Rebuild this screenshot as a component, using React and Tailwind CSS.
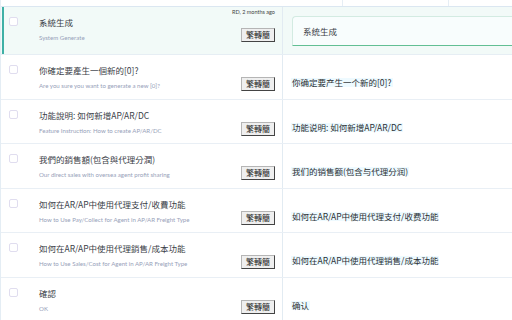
import React from 'react';

const rows = [
  { tw: '你確定要產生一個新的[0]?', en: 'Are you sure you want to generate a new [0]?', cn: '你确定要产生一个新的[0]?' },
  { tw: '功能說明: 如何新增AP/AR/DC', en: 'Feature Instruction: How to create AP/AR/DC', cn: '功能说明: 如何新增AP/AR/DC' },
  { tw: '我們的銷售額(包含與代理分潤)', en: 'Our direct sales with oversea agent profit sharing', cn: '我们的销售额(包含与代理分润)' },
  { tw: '如何在AR/AP中使用代理支付/收費功能', en: 'How to Use Pay/Collect for Agent in AP/AR Freight Type', cn: '如何在AR/AP中使用代理支付/收费功能' },
  { tw: '如何在AR/AP中使用代理銷售/成本功能', en: 'How to Use Sales/Cost for Agent in AP/AR Freight Type', cn: '如何在AR/AP中使用代理销售/成本功能' },
  { tw: '確認', en: 'OK', cn: '确认' },
];

const ConvertButton = () => (
  <button
    type="button"
    className="h-[14px] w-[34px] bg-[#efefef] border border-t-[#b5b5b5] border-l-[#b5b5b5] border-b-[#444] border-r-[#444] text-[8px] leading-[12px] text-[#222]"
    style={{ fontFamily: '"Noto Sans CJK TC", sans-serif' }}
  >
    繁轉簡
  </button>
);

const Checkbox = () => (
  <span className="block w-[9px] h-[9px] rounded-[2px] border border-[#e0ddef] bg-white" />
);

const LeftCell = ({ tw, en, meta }) => (
  <div className="flex w-[282px] shrink-0 border-r border-[#e2ebf2] pr-[7px]">
    <div className="pl-2 pt-[10px]">
      <Checkbox />
    </div>
    <div className="ml-[21px] flex-1 pt-[10px]">
      <div
        className="text-[8.5px] leading-[11px] text-[#3a4047] whitespace-nowrap"
        style={{ fontFamily: '"Noto Sans CJK TC", "Noto Sans", sans-serif' }}
      >
        {tw}
      </div>
      <div className="mt-[5px] text-[6.1px] leading-[9px] text-[#97a1b9] whitespace-nowrap font-['Lato',sans-serif]">
        {en}
      </div>
    </div>
    <div className={meta ? 'flex flex-col items-end pt-[2px]' : 'flex flex-col items-end pt-[22px]'}>
      {meta && (
        <div className="text-[5.5px] leading-[6px] text-[#444] whitespace-nowrap mb-[13px] font-['Lato',sans-serif]">
          {meta}
        </div>
      )}
      <ConvertButton />
    </div>
  </div>
);

export default function App() {
  return (
    <div className="w-[512px] h-[320px] overflow-hidden bg-white border-l border-[#e4edf4]">
      {/* tail of the row above */}
      <div className="flex h-[7px] border-b border-[#dbe7f1]">
        <div className="w-[342px] border-r border-[#e6eef5]" />
        <div className="w-[106px] border-r border-[#e6eef5]" />
        <div className="flex-1" />
      </div>

      {/* selected row */}
      <div className="relative flex h-[48px] bg-[#f2faf8] border-b border-[#e6eef4]">
        <span className="absolute left-[1px] top-0 bottom-0 w-[2px] bg-[#3fb0a6]" />
        <LeftCell tw="系統生成" en="System Generate" meta="RD, 2 months ago" />
        <div className="flex-1 pl-[9px] pt-[9px]">
          <div className="h-[30px] flex items-center pl-[10px] rounded-tl-[4px] bg-[#f8fdfd] border-t border-l border-[#d3ebe2] border-b border-b-[#62bf94]">
            <span
              className="text-[8.5px] text-[#3a4047]"
              style={{ fontFamily: '"Noto Sans CJK SC", sans-serif' }}
            >
              系统生成
            </span>
          </div>
        </div>
      </div>

      {rows.map((r) => (
        <div key={r.en} className="flex h-[44.6px] border-b border-[#e9eff5]">
          <LeftCell tw={r.tw} en={r.en} />
          <div className="flex-1 pl-[8px] pt-[13px]">
            <span
              className="inline-block bg-[#eefaff] px-[1px] text-[8.5px] leading-[9px] text-[#2b2f33] whitespace-nowrap"
              style={{ fontFamily: '"Noto Sans CJK SC", sans-serif' }}
            >
              {r.cn}
            </span>
          </div>
        </div>
      ))}
    </div>
  );
}
